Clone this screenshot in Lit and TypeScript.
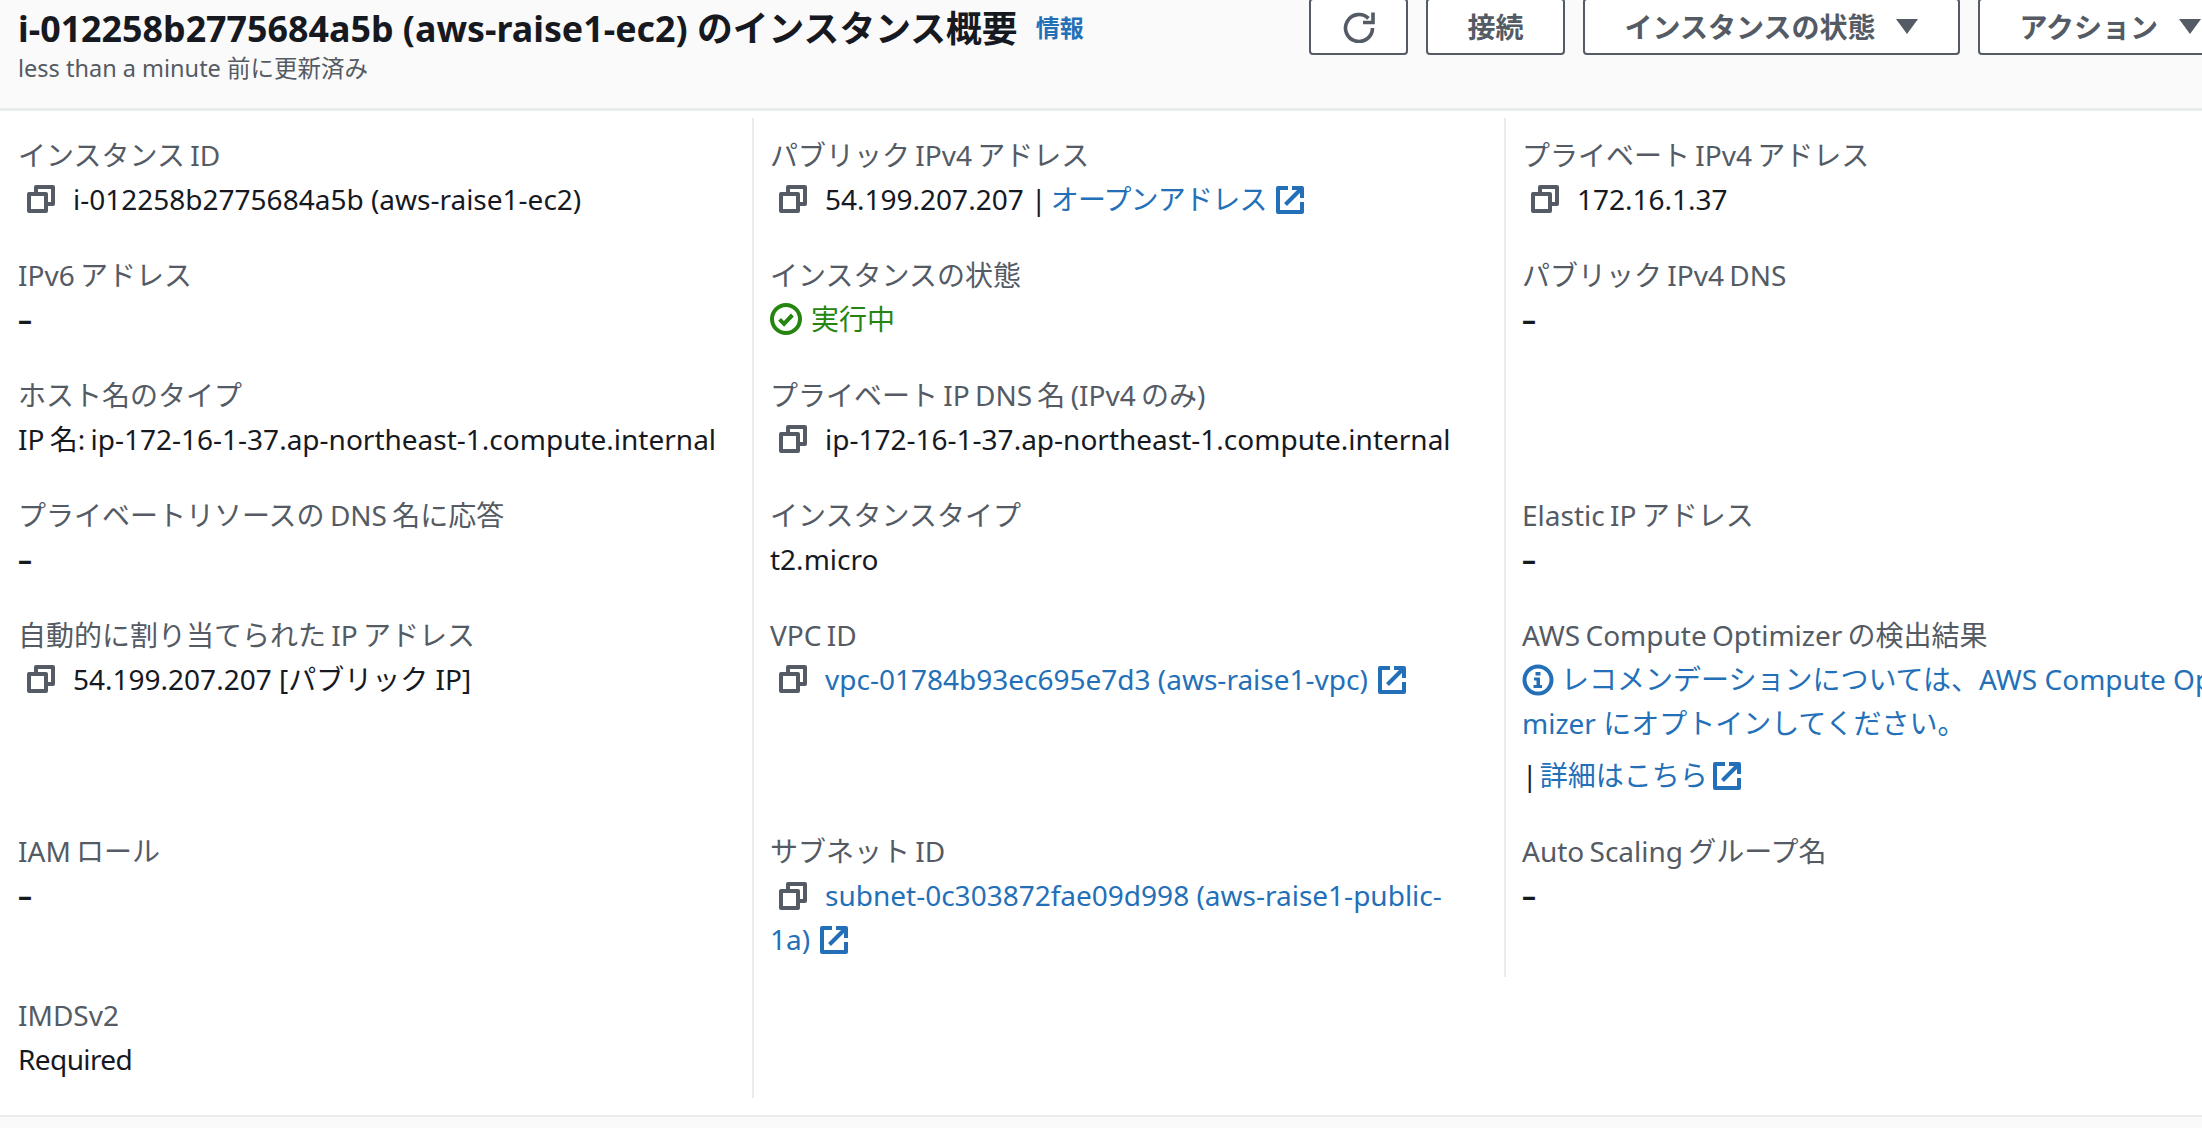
import { LitElement, html, css, svg } from 'lit';
import { customElement } from 'lit/decorators.js';

const copyIcon = html`<svg class="icon copy" viewBox="0 0 16 16" aria-hidden="true">
  <path d="M2 5.5h8.5v8.5H2z" />
  <path d="M5.5 5.5V2H14v8.5h-3.5" />
</svg>`;

const externalIcon = html`<svg class="icon ext" viewBox="0 0 28 28" aria-hidden="true">
  <path d="M12 2H2v24h24V16" />
  <path d="M16 2h10v10" />
  <path d="M25 3 9.5 18.5" />
</svg>`;

const refreshIcon = svg`<path d="M29.5 17A13.5 13.5 0 1 1 25.5 7.4" /><path d="M30 1.5v10H20" />`;

const caret = html`<svg class="caret" viewBox="0 0 22 15" aria-hidden="true"><path d="M0 0h22L11 15z" /></svg>`;

@customElement('app-root')
export class AppRoot extends LitElement {
  static styles = css`
    :host {
      display: block;
      width: 2202px;
      height: 1128px;
      overflow: hidden;
      background: #fff;
      color: #16191f;
      font-family: 'Noto Sans', 'Noto Sans CJK JP', sans-serif;
      font-size: 28px;
      line-height: 44px;
    }
    a {
      color: #2470b8;
      text-decoration: none;
    }
    .header {
      display: flex;
      gap: 18px;
      height: 111px;
      box-sizing: border-box;
      background: #fafafa;
      border-bottom: 3px solid #eaeded;
      padding-left: 18px;
      overflow: hidden;
    }
    .heading {
      flex: 0 0 1273px;
      padding-top: 6px;
    }
    .title {
      display: flex;
      align-items: center;
      gap: 18px;
      height: 44px;
    }
    h1 {
      margin: 0;
      font-size: 35.8px;
      font-weight: 700;
      line-height: 44px;
      white-space: nowrap;
    }
    .info {
      font-size: 24px;
      font-weight: 700;
    }
    .sub {
      color: #545b64;
      font-size: 23.5px;
      line-height: 36px;
    }
    .actions {
      display: flex;
      gap: 18px;
      flex: none;
      margin-top: -2px;
    }
    button {
      display: flex;
      align-items: center;
      justify-content: center;
      gap: 21px;
      height: 57px;
      box-sizing: border-box;
      padding: 0 39.5px;
      background: #fff;
      border: 2px solid #545b64;
      border-radius: 4px;
      color: #545b64;
      font: inherit;
      font-weight: 700;
      white-space: nowrap;
    }
    button.refresh {
      width: 99px;
      padding: 0;
    }
    button.refresh svg {
      width: 32px;
      height: 32px;
      fill: none;
      stroke: #545b64;
      stroke-width: 3.6;
    }
    .caret {
      width: 22px;
      height: 15px;
      fill: #545b64;
    }
    .grid {
      display: grid;
      grid-template-columns: repeat(3, 752px);
      padding-top: 7px;
    }
    .cell {
      padding: 0 18px 32px 16px;
      border-left: 2px solid #eaeded;
    }
    .cell.top {
      padding-top: 15px;
    }
    .cell.first {
      border-left: 0;
      padding-left: 18px;
    }
    .cell.end {
      padding-bottom: 17px;
      align-self: start;
    }
    .cell.filler {
      height: 105px;
      box-sizing: border-box;
    }
    .cell.short {
      padding-bottom: 0;
      margin-bottom: 16px;
    }
    .label {
      color: #545b64;
      word-spacing: -2px;
    }
    .value {
      min-height: 44px;
    }
    .value.wrap {
      padding-right: 40px;
    }
    .tight {
      word-spacing: -2px;
    }
    .narrow {
      letter-spacing: -0.6px;
    }
    .open {
      margin-left: -3px;
      letter-spacing: -0.8px;
    }
    .dash {
      font-weight: 700;
    }
    .copy-row {
      display: flex;
      align-items: center;
    }
    .icon {
      flex: none;
      fill: none;
      stroke-linejoin: round;
    }
    .copy {
      width: 32px;
      height: 32px;
      margin: 0 16px 0 7px;
      vertical-align: -6px;
      stroke: #545b64;
      stroke-width: 2;
    }
    .ext {
      display: inline-block;
      width: 28px;
      height: 28px;
      margin-left: 3px;
      vertical-align: -4px;
      stroke: #2470b8;
      stroke-width: 4;
    }
    .running {
      display: flex;
      align-items: center;
      gap: 9px;
      color: #258510;
    }
    .running svg {
      width: 32px;
      height: 32px;
      fill: none;
      stroke: #258510;
      stroke-width: 2;
    }
    .notice {
      color: #2470b8;
    }
    .notice svg {
      width: 32px;
      height: 32px;
      margin-right: 7px;
      vertical-align: -6px;
      fill: #2470b8;
    }
    .notice circle {
      fill: none;
      stroke: #2470b8;
      stroke-width: 4;
    }
    .detail {
      padding-top: 8px;
      white-space: nowrap;
      word-spacing: -5px;
    }
    .footer {
      margin-top: 17px;
      height: 13px;
      background: #fafafa;
      border-top: 2px solid #eaeded;
    }
  `;

  private cell(label: string, value: unknown, cls = '') {
    return html`<div class="cell ${cls}">
      <div class="label">${label}</div>
      <div class="value">${value}</div>
    </div>`;
  }

  private copied(value: unknown) {
    return html`<div class="copy-row">${copyIcon}<span>${value}</span></div>`;
  }

  render() {
    const dash = html`<span class="dash">–</span>`;
    return html`
      <div class="header">
        <div class="heading">
          <div class="title">
            <h1>i-012258b2775684a5b (aws-raise1-ec2) のインスタンス概要</h1>
            <a class="info" href="#">情報</a>
          </div>
          <div class="sub">less than a minute 前に更新済み</div>
        </div>
        <div class="actions">
          <button class="refresh" aria-label="更新"><svg viewBox="0 0 32 32">${refreshIcon}</svg></button>
          <button>接続</button>
          <button>インスタンスの状態 ${caret}</button>
          <button>アクション ${caret}</button>
        </div>
      </div>
      <div class="grid">
        ${this.cell('インスタンス ID', this.copied('i-012258b2775684a5b (aws-raise1-ec2)'), 'first top')}
        ${this.cell('パブリック IPv4 アドレス', this.copied(html`54.199.207.207 | <a class="open" href="#">オープンアドレス ${externalIcon}</a>`), 'top')}
        ${this.cell('プライベート IPv4 アドレス', this.copied('172.16.1.37'), 'top')}

        ${this.cell('IPv6 アドレス', dash, 'first')}
        ${this.cell(
          'インスタンスの状態',
          html`<div class="running">
            <svg viewBox="0 0 16 16"><circle cx="8" cy="8" r="7" /><path d="M4.8 8.2 7 10.4l4.2-4.4" /></svg>
            実行中
          </div>`,
        )}
        ${this.cell('パブリック IPv4 DNS', dash)}

        ${this.cell('ホスト名のタイプ', html`<span class="tight">IP 名: ip-172-16-1-37.ap-northeast-1.compute.internal</span>`, 'first')}
        ${this.cell('プライベート IP DNS 名 (IPv4 のみ)', this.copied('ip-172-16-1-37.ap-northeast-1.compute.internal'))}
        <div class="cell"></div>

        ${this.cell('プライベートリソースの DNS 名に応答', dash, 'first')}
        ${this.cell('インスタンスタイプ', 't2.micro')}
        ${this.cell('Elastic IP アドレス', dash)}

        ${this.cell('自動的に割り当てられた IP アドレス', this.copied('54.199.207.207 [パブリック IP]'), 'first')}
        ${this.cell('VPC ID', this.copied(html`<a href="#">vpc-01784b93ec695e7d3 (aws-raise1-vpc) ${externalIcon}</a>`))}
        ${this.cell(
          'AWS Compute Optimizer の検出結果',
          html`<div class="notice">
              <svg viewBox="0 0 32 32">
                <circle cx="16" cy="16" r="13.5" />
                <rect x="13.5" y="8" width="5" height="3.5" />
                <path d="M12 13.5h6V21h2v3H11.500v-3h3v-4.500H12z" />
              </svg>レコメンデーションについては、AWS Compute Opti<br />mizer にオプトインしてください。
            </div>
            <div class="detail">| <a href="#">詳細はこちら ${externalIcon}</a></div>`,
        )}

        ${this.cell('IAM ロール', dash, 'first')}
        <div class="cell">
          <div class="label">サブネット ID</div>
          <div class="value wrap">
            ${copyIcon}<a href="#">subnet-0c303872fae09d998 (aws-raise1-public-1a) ${externalIcon}</a>
          </div>
        </div>
        ${this.cell('Auto Scaling グループ名', dash, 'short')}

        ${this.cell('IMDSv2', html`<span class="narrow">Required</span>`, 'first end')}
        <div class="cell end filler"></div>
      </div>
      <div class="footer"></div>
    `;
  }
}
